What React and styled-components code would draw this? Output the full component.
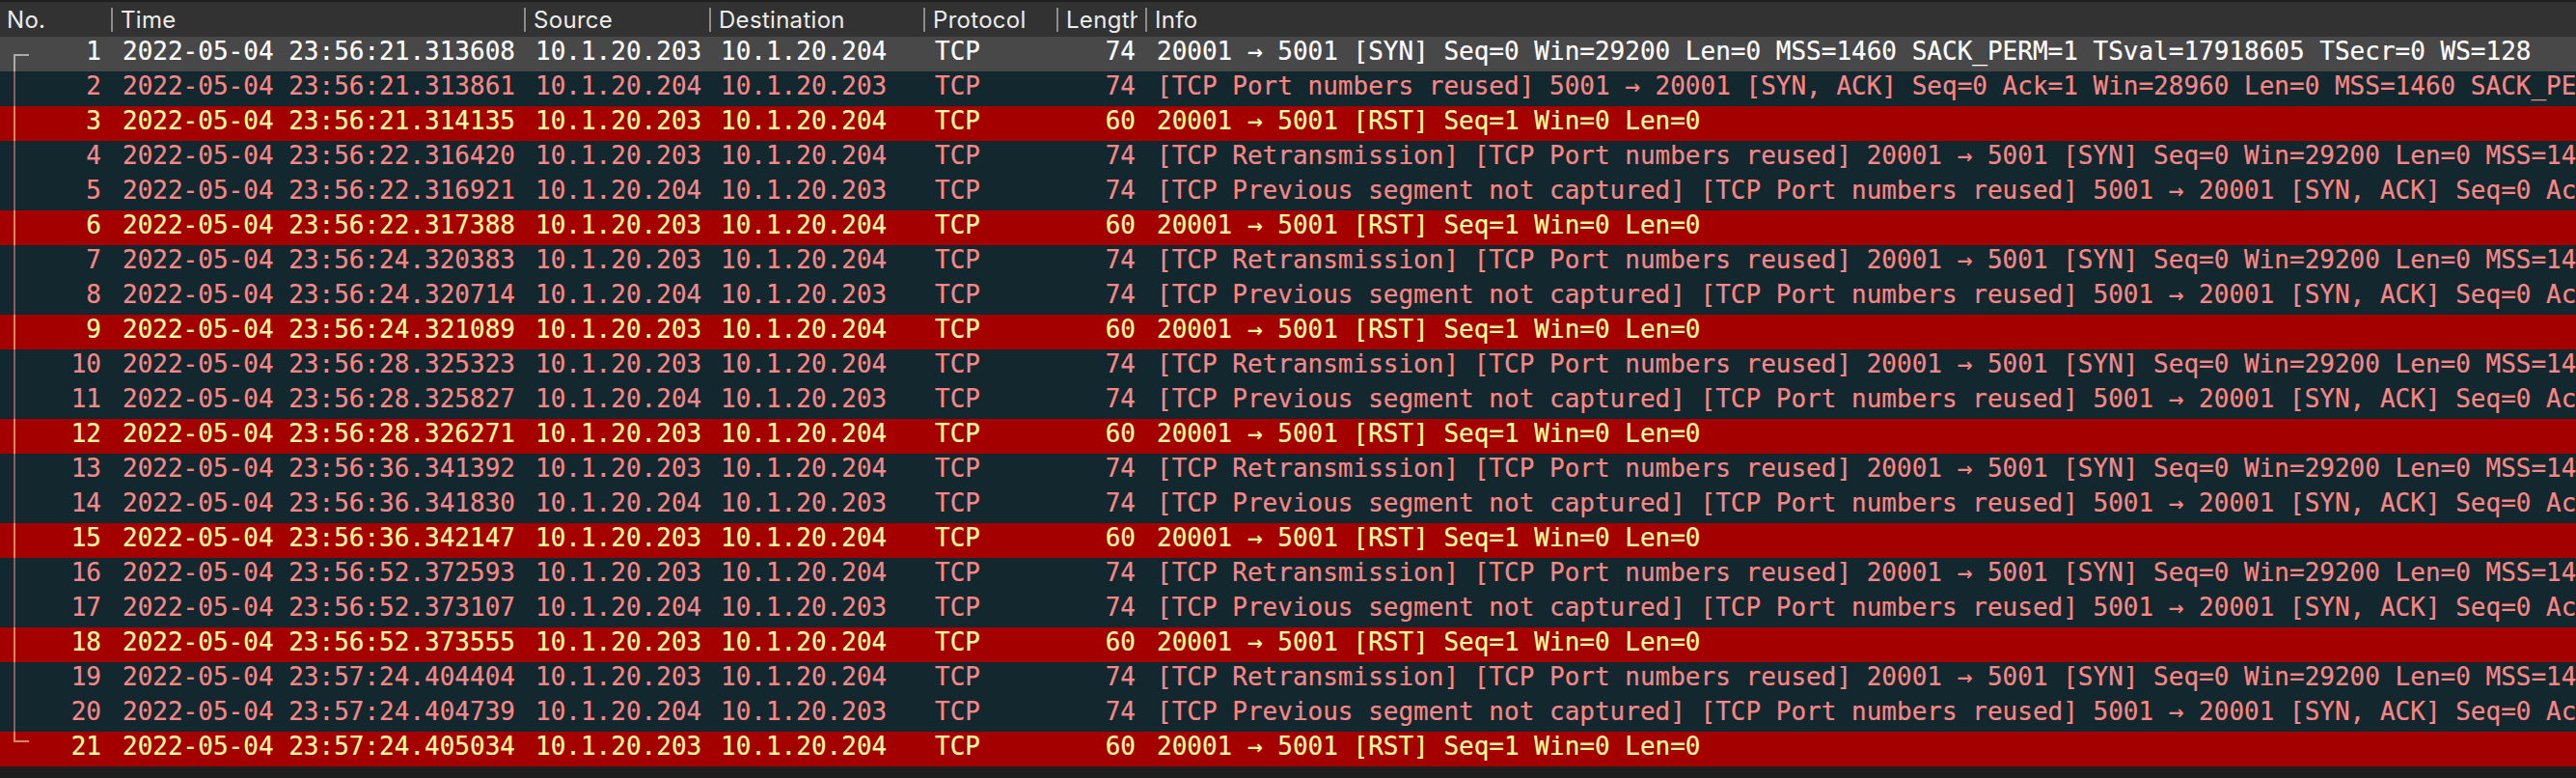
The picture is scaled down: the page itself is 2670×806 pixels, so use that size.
import React from "react";
import styled, { createGlobalStyle, css } from "styled-components";

const GlobalStyle = createGlobalStyle`
  html, body {
    margin: 0;
    padding: 0;
    background: #1e1e1e;
  }
`;

// column widths of the packet list
const COLUMNS = "115px 428px 192px 222px 138px 92px 1fr";

const SCHEMES = {
  selected: { bg: "#484848", fg: "#ffffff" },
  bad: { bg: "#12272e", fg: "#f78787" },
  rst: { bg: "#a40000", fg: "#fffc9c" },
};

const INFO = {
  syn: "20001 → 5001 [SYN] Seq=0 Win=29200 Len=0 MSS=1460 SACK_PERM=1 TSval=17918605 TSecr=0 WS=128",
  synack:
    "[TCP Port numbers reused] 5001 → 20001 [SYN, ACK] Seq=0 Ack=1 Win=28960 Len=0 MSS=1460 SACK_PERM=1 TSval=17918605 TSecr=17918605 WS=128",
  rst: "20001 → 5001 [RST] Seq=1 Win=0 Len=0",
  retrans:
    "[TCP Retransmission] [TCP Port numbers reused] 20001 → 5001 [SYN] Seq=0 Win=29200 Len=0 MSS=1460 SACK_PERM=1 TSval=17919608 TSecr=0 WS=128",
  prev:
    "[TCP Previous segment not captured] [TCP Port numbers reused] 5001 → 20001 [SYN, ACK] Seq=0 Ack=1 Win=28960 Len=0 MSS=1460 SACK_PERM=1",
};

const TIMES = [
  "23:56:21.313608",
  "23:56:21.313861",
  "23:56:21.314135",
  "23:56:22.316420",
  "23:56:22.316921",
  "23:56:22.317388",
  "23:56:24.320383",
  "23:56:24.320714",
  "23:56:24.321089",
  "23:56:28.325323",
  "23:56:28.325827",
  "23:56:28.326271",
  "23:56:36.341392",
  "23:56:36.341830",
  "23:56:36.342147",
  "23:56:52.372593",
  "23:56:52.373107",
  "23:56:52.373555",
  "23:57:24.404404",
  "23:57:24.404739",
  "23:57:24.405034",
];

const packets = TIMES.map((t, i) => {
  const step = i % 3;
  const first = i < 3;
  let kind;
  if (step === 2) kind = "rst";
  else if (step === 0) kind = first ? "syn" : "retrans";
  else kind = first ? "synack" : "prev";
  const fromClient = step !== 1;
  return {
    no: i + 1,
    time: `2022-05-04 ${t}`,
    src: fromClient ? "10.1.20.203" : "10.1.20.204",
    dst: fromClient ? "10.1.20.204" : "10.1.20.203",
    proto: "TCP",
    len: step === 2 ? 60 : 74,
    info: INFO[kind],
    scheme: i === 0 ? "selected" : step === 2 ? "rst" : "bad",
    tree: i === 0 ? "first" : i === TIMES.length - 1 ? "last" : "mid",
  };
});

const headers = ["No.", "Time", "Source", "Destination", "Protocol", "Length", "Info"];

const PacketList = () => (
  <List>
    <HeaderRow>
      {headers.map((h, i) => (
        <HeadCell key={h}>
          {i > 0 && <Divider />}
          <HeadLabel>{h}</HeadLabel>
        </HeadCell>
      ))}
    </HeaderRow>
    {packets.map((p) => (
      <Row key={p.no} $scheme={p.scheme}>
        <NoCell>
          <Tree $kind={p.tree} />
          <span>{p.no}</span>
        </NoCell>
        <Cell>{p.time}</Cell>
        <Cell>{p.src}</Cell>
        <Cell>{p.dst}</Cell>
        <Cell>{p.proto}</Cell>
        <Cell $right>{p.len}</Cell>
        <Cell>{p.info}</Cell>
      </Row>
    ))}
  </List>
);

export default function App() {
  return (
    <>
      <GlobalStyle />
      <PacketList />
    </>
  );
}

const List = styled.div`
  width: 100vw;
  height: 806px;
  overflow: hidden;
  background: #1e1e1e;
`;

const HeaderRow = styled.div`
  display: grid;
  grid-template-columns: ${COLUMNS};
  height: 36px;
  border-top: 2px solid #1f1f1f;
  background: #323232;
  font-family: Inter, "Liberation Sans", sans-serif;
  font-size: 24px;
  letter-spacing: 0.3px;
  color: #ececec;
`;

const HeadCell = styled.div`
  display: flex;
  align-items: center;
  gap: 8px;
  min-width: 0;
  overflow: hidden;
  padding: 0 8px 0 0;

  &:first-child {
    padding-left: 7px;
  }
`;

const HeadLabel = styled.span`
  white-space: nowrap;
  overflow: hidden;
`;

const Divider = styled.span`
  flex: none;
  width: 2px;
  height: 25px;
  background: #8c8c8c;
`;

const Row = styled.div`
  display: grid;
  grid-template-columns: ${COLUMNS};
  height: 36px;
  background: ${({ $scheme }) => SCHEMES[$scheme].bg};
  color: ${({ $scheme }) => SCHEMES[$scheme].fg};
  font-family: "DejaVu Sans Mono", "Liberation Mono", monospace;
  font-size: 26px;
  line-height: 30px;
  -webkit-text-stroke: 0.2px currentColor;
`;

const Cell = styled.div`
  min-width: 0;
  padding: 0 10px 0 12px;
  white-space: nowrap;
  overflow: hidden;
  text-align: ${({ $right }) => ($right ? "right" : "left")};

  &:last-child {
    overflow: visible;
    padding-right: 0;
  }
`;

const NoCell = styled.div`
  display: flex;
  padding-right: 10px;

  span {
    flex: 1;
    text-align: right;
  }
`;

const treeShapes = {
  first: css`
    &::before {
      top: 18px;
      bottom: 0;
    }
    &::after {
      top: 18px;
    }
  `,
  mid: css`
    &::before {
      top: 0;
      bottom: 0;
    }
    &::after {
      display: none;
    }
  `,
  last: css`
    &::before {
      top: 0;
      height: 11px;
    }
    &::after {
      top: 9px;
    }
  `,
};

const Tree = styled.span`
  position: relative;
  flex: none !important;
  width: 30px;
  align-self: stretch;
  opacity: 0.55;

  &::before,
  &::after {
    content: "";
    position: absolute;
    left: 14px;
    background: currentColor;
  }
  &::before {
    width: 2px;
  }
  &::after {
    width: 16px;
    height: 2px;
  }
  ${({ $kind }) => treeShapes[$kind]}
`;
